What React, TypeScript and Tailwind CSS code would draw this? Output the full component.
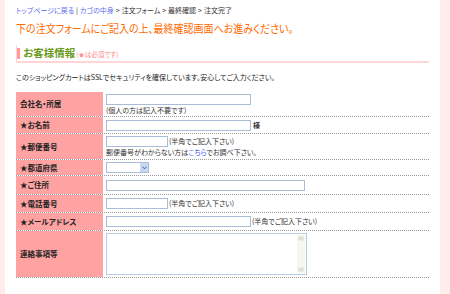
import React from "react";

const F = { fontFamily: '"Noto Sans CJK JP", "Noto Sans", sans-serif', fontFeatureSettings: '"palt"' } as React.CSSProperties;

function Input({ w }: { w: number }) {
  return (
    <input
      type="text"
      className="h-[11px] border border-[#a9bdd6] bg-white outline-none p-0 block"
      style={{ width: w }}
    />
  );
}

function Row({
  label,
  h,
  children,
}: {
  label: string;
  h: number;
  children: React.ReactNode;
}) {
  return (
    <div className="flex border-b border-dotted border-[#9a9a9a]" style={{ height: h }}>
      <div className="w-[87px] shrink-0 bg-[#ffa2a2] flex items-center pl-[4px] text-[7.5px] font-bold text-[#222] leading-none">
        {label}
      </div>
      <div className="flex-1 pl-[3px] flex flex-col justify-center text-[7px] text-[#333] leading-[9px]">
        {children}
      </div>
    </div>
  );
}

export default function App() {
  return (
    <div className="w-[450px] h-[294px] flex bg-white overflow-hidden" style={F}>
      <div className="w-[5px] shrink-0 bg-[#ffecec]" />
      <div className="flex-1 pl-[11px] pr-[11px] flex flex-col">
        <div className="h-[20px] flex items-center pt-[1px] text-[7px] text-[#333] leading-none whitespace-nowrap">
          <span className="text-[#5a6cf0]">トップページに戻る</span>
          <span className="mx-[2px]">|</span>
          <span className="text-[#5a6cf0]">カゴの中身</span>
          <span className="mx-[2px]">&gt;</span>
          <span>注文フォーム</span>
          <span className="mx-[2px]">&gt;</span>
          <span>最終確認</span>
          <span className="mx-[2px]">&gt;</span>
          <span>注文完了</span>
        </div>
        <div className="h-[16px] flex items-center text-[10px] text-[#ff6a00] leading-none whitespace-nowrap">
          <span className="inline-block scale-y-[1.15]">下の注文フォームにご記入の上、最終確認画面へお進みください。</span>
        </div>
        <div className="mt-[9px] h-[18px] border-b-2 border-[#ffd6d6] border-l border-l-[#ffd6d6] flex items-center">
          <div className="border-l-[3px] border-[#ff9a9a] pl-[3px] h-[11px] flex items-center">
            <span className="text-[10.5px] text-[#6a9a1a] font-bold leading-none">お客様情報</span>
            <span className="text-[6.5px] text-[#ff8a8a] leading-none ml-[1px] mt-[3px]">(★は必須です)</span>
          </div>
        </div>
        <div className="h-[29px] flex items-center text-[7px] text-[#222] leading-none whitespace-nowrap">
          このショッピングカートはSSLでセキュリティを確保しています。安心してご入力ください。
        </div>
        <div className="flex flex-col w-[413px]">
          <Row label="会社名・所属" h={25}>
            <Input w={145} />
            <div className="mt-[1px]">(個人の方は記入不要です)</div>
          </Row>
          <Row label="★お名前" h={17}>
            <div className="flex items-center gap-[2px]">
              <Input w={145} />
              <span className="font-bold">様</span>
            </div>
          </Row>
          <Row label="★郵便番号" h={26}>
            <div className="flex items-center gap-[1px]">
              <Input w={62} />
              <span>(半角でご記入下さい)</span>
            </div>
            <div className="mt-[1px]">
              郵便番号がわからない方は<span className="text-[#4a5cf0]">こちら</span>でお調べ下さい。
            </div>
          </Row>
          <Row label="★都道府県" h={16}>
            <div className="w-[43px] h-[11px] border border-[#a9bdd6] bg-white flex justify-end">
              <div className="w-[8px] h-full bg-[#c9d8f2] flex items-center justify-center">
                <svg width="5" height="4" viewBox="0 0 5 4">
                  <path d="M0.5 0.8 L2.5 2.8 L4.5 0.8" fill="none" stroke="#3550a0" strokeWidth="1" />
                </svg>
              </div>
            </div>
          </Row>
          <Row label="★ご住所" h={19}>
            <Input w={199} />
          </Row>
          <Row label="★電話番号" h={18}>
            <div className="flex items-center gap-[1px]">
              <Input w={62} />
              <span>(半角でご記入下さい)</span>
            </div>
          </Row>
          <Row label="★メールアドレス" h={18}>
            <div className="flex items-center gap-[1px]">
              <Input w={145} />
              <span>(半角でご記入下さい)</span>
            </div>
          </Row>
          <Row label="連絡事項等" h={47}>
            <div className="w-[201px] h-[42px] border border-[#b8cce0] bg-white flex justify-end p-[1px]">
              <div className="w-[8px] h-full bg-[#f7f7f0] flex flex-col justify-between items-center py-[1px]">
                <svg width="6" height="5" viewBox="0 0 6 5">
                  <rect width="6" height="5" fill="#ecece4" />
                  <path d="M1 3.5 L3 1.5 L5 3.5" fill="none" stroke="#c4c4bc" strokeWidth="1" />
                </svg>
                <svg width="6" height="5" viewBox="0 0 6 5">
                  <rect width="6" height="5" fill="#ecece4" />
                  <path d="M1 1.5 L3 3.5 L5 1.5" fill="none" stroke="#c4c4bc" strokeWidth="1" />
                </svg>
              </div>
            </div>
          </Row>
        </div>
      </div>
      <div className="w-[10px] shrink-0 bg-[#ffecec]" />
    </div>
  );
}
